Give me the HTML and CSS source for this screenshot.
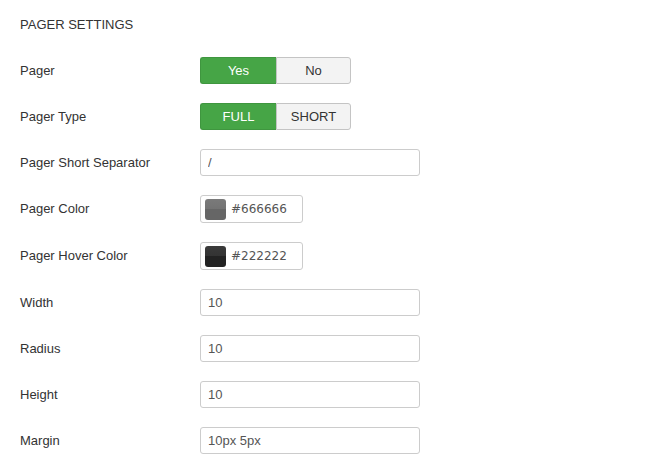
FILE: index.html
```html
<!DOCTYPE html>
<html lang="en">
<head>
    <meta charset="UTF-8">
    <title>Pager Settings</title>
    <link rel="stylesheet" href="styles.css">
</head>
<body>
    <div class="settings">
        <h3 class="settings-title">PAGER SETTINGS</h3>

        <div class="row">
            <label>Pager</label>
            <div class="btn-group">
                <button class="btn active">Yes</button>
                <button class="btn">No</button>
            </div>
        </div>

        <div class="row">
            <label>Pager Type</label>
            <div class="btn-group">
                <button class="btn active">FULL</button>
                <button class="btn">SHORT</button>
            </div>
        </div>

        <div class="row">
            <label>Pager Short Separator</label>
            <input type="text" class="text-input" value="/">
        </div>

        <div class="row">
            <label>Pager Color</label>
            <div class="color-input">
                <span class="swatch swatch-666"></span>
                <span class="color-value">#666666</span>
            </div>
        </div>

        <div class="row">
            <label>Pager Hover Color</label>
            <div class="color-input">
                <span class="swatch swatch-222"></span>
                <span class="color-value">#222222</span>
            </div>
        </div>

        <div class="row">
            <label>Width</label>
            <input type="text" class="text-input" value="10">
        </div>

        <div class="row">
            <label>Radius</label>
            <input type="text" class="text-input" value="10">
        </div>

        <div class="row">
            <label>Height</label>
            <input type="text" class="text-input" value="10">
        </div>

        <div class="row">
            <label>Margin</label>
            <input type="text" class="text-input" value="10px 5px">
        </div>
    </div>
</body>
</html>
```

FILE: styles.css
```css
body {
    margin: 0;
    background: #fff;
    font-family: "Liberation Sans", Arial, sans-serif;
    font-size: 13px;
    color: #333;
}

.settings {
    padding: 16px 20px 0 20px;
}

.settings-title {
    margin: 0 0 23px 0;
    font-size: 13px;
    line-height: 18px;
    font-weight: normal;
    color: #333;
}

.row {
    display: flex;
    align-items: center;
    margin-bottom: 19px;
}

.row label {
    width: 180px;
    line-height: 18px;
}

.btn-group {
    display: flex;
    height: 27px;
}

.btn {
    width: 75px;
    height: 27px;
    box-sizing: border-box;
    font-family: "Liberation Sans", Arial, sans-serif;
    font-size: 13px;
    color: #333;
    background: #f3f3f3;
    border: 1px solid #c4c4c4;
    padding: 0;
    margin: 0;
}

.btn:first-child {
    width: 76px;
    border-radius: 3px 0 0 3px;
    border-right: none;
}

.btn:last-child {
    border-radius: 0 3px 3px 0;
}

.btn.active {
    background: #46a546;
    border-color: #3f963f;
    color: #fff;
}

.text-input {
    width: 220px;
    height: 27px;
    box-sizing: border-box;
    margin: 0;
    padding: 0 7px;
    border: 1px solid #ccc;
    border-radius: 3px;
    font-family: "Liberation Sans", Arial, sans-serif;
    font-size: 13px;
    color: #555;
}

.color-input {
    display: flex;
    align-items: center;
    width: 103px;
    height: 28px;
    box-sizing: border-box;
    border: 1px solid #ccc;
    border-radius: 3px;
    padding-left: 4px;
}

.swatch {
    width: 21px;
    height: 21px;
    border-radius: 3px;
    margin-right: 5px;
}

.swatch-666 {
    background: linear-gradient(#7a7a7a 0, #737373 50%, #666 50%, #666 100%);
}

.swatch-222 {
    background: linear-gradient(#3a3a3a 0, #333 50%, #222 50%, #222 100%);
}

.color-value {
    font-family: "DejaVu Sans", Verdana, sans-serif;
    font-size: 12px;
    color: #555;
}
```
